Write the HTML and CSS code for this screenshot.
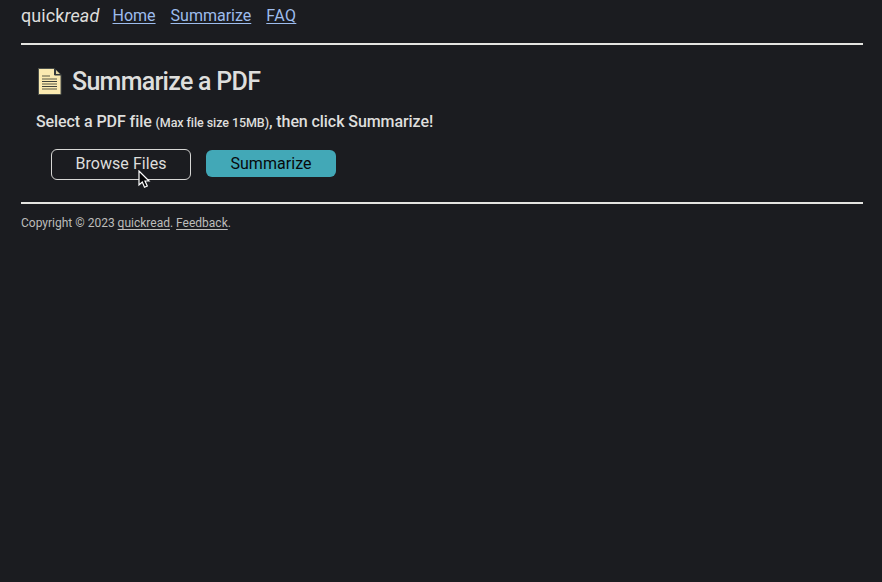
FILE: index.html
```html
<!DOCTYPE html>
<html lang="en">
<head>
<meta charset="utf-8">
<title>quickread</title>
<link rel="stylesheet" href="styles.css">
</head>
<body>
<header class="site-header">
  <div class="brand">quick<em>read</em></div>
  <nav class="nav"><a class="home" href="#">Home</a><a class="sum" href="#">Summarize</a><a class="faq" href="#">FAQ</a></nav>
</header>
<main class="panel">
  <div class="heading">
    <svg class="doc" width="24" height="27" viewBox="0 0 24 27" aria-hidden="true">
      <path d="M.5.5H16.5L23 7V26.5H.5Z" fill="#fbeab1" stroke="#4a4f4a"/>
      <path d="M16.5.5V7H23.5Z" fill="#34383a" stroke="#34383a"/>
      <path d="M18 2V6H22Z" fill="#e5d6a2"/>
      <path d="M4 8H12M4 11H19M4 16H19M4 21H19" stroke="#aaa17b" stroke-width="2"/>
      <path d="M4 13.5H19M4 18.5H19" stroke="#3f423c"/>
    </svg>
    <h1>Summarize a PDF</h1>
  </div>
  <p class="lead">Select a PDF file <small>(Max file size 15MB)</small>, then click Summarize!</p>
  <div class="actions">
    <button class="browse">Browse Files
      <svg class="cursor" width="13" height="20" viewBox="0 0 13 20" aria-hidden="true"><path d="M1 1V15L4.3 12L6.5 17.3L9.3 16L7 11H11Z" fill="#050507" stroke="#fff" stroke-width="1.2"/></svg>
    </button>
    <button class="submit">Summarize</button>
  </div>
</main>
<footer class="footer">Copyright © 2023 <a href="#">quickread</a>. <a href="#">Feedback</a>.</footer>
</body>
</html>
```
FILE: styles.css
```css
* { box-sizing: border-box; }
body {
  margin: 0 19px 0 21px;
  background: #1b1c20;
  color: #dededc;
  font-family: Roboto, sans-serif;
  font-size: 16px;
}
.site-header {
  display: flex;
  align-items: flex-start;
  height: 45px;
  padding-top: 4px;
  border-bottom: 2px solid #e4e4e0;
  line-height: 24px;
}
.brand { width: 91.5px; font-size: 18px; letter-spacing: .1px; white-space: nowrap; }
.nav { display: flex; gap: 15px; }
.faq { letter-spacing: .4px; }
a { color: inherit; text-underline-offset: 2px; text-decoration-skip-ink: none; }
.nav a { color: #9dbced; }
.panel { height: 159px; padding: 19px 15px 0; border-bottom: 2px solid #e4e4e0; }
.heading { display: flex; align-items: center; height: 34px; gap: 10px; padding-left: 2px; }
h1 { margin: 2px 0 0; font-size: 25px; font-weight: 500; line-height: 34px; letter-spacing: -.72px; white-space: nowrap; }
.lead { margin: 12px 0 0; line-height: 24px; font-weight: 500; letter-spacing: -.08px; white-space: nowrap; }
.lead small { font-size: 12.5px; }
.actions { display: flex; align-items: center; gap: 15px; margin: 14px 0 0 15px; }
button { padding: 0 0 2px; border: 0; border-radius: 6px; font: 400 16px/24px Roboto, sans-serif; letter-spacing: .05px; }
.browse { position: relative; width: 140px; height: 31px; border: 1px solid #d7d7d5; background: transparent; color: #dededc; }
.cursor { position: absolute; left: 86px; top: 20px; }
.submit { width: 130px; height: 27px; margin-bottom: 2px; padding-bottom: 0; background: #42a8b7; color: #08090b; }
.footer { padding-top: 10px; font-size: 12px; line-height: 18px; color: #bdbdbb; }
```
